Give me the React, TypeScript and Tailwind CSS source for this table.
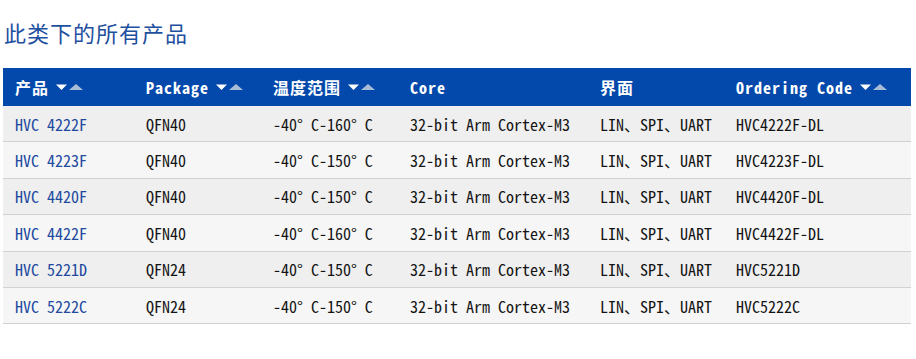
import React from "react";

type Product = {
  name: string;
  pkg: string;
  temp: string;
  core: string;
  iface: string;
  code: string;
};

const products: Product[] = [
  { name: "HVC 4222F", pkg: "QFN40", temp: "-40° C-160° C", core: "32-bit Arm Cortex-M3", iface: "LIN、SPI、UART", code: "HVC4222F-DL" },
  { name: "HVC 4223F", pkg: "QFN40", temp: "-40° C-150° C", core: "32-bit Arm Cortex-M3", iface: "LIN、SPI、UART", code: "HVC4223F-DL" },
  { name: "HVC 4420F", pkg: "QFN40", temp: "-40° C-150° C", core: "32-bit Arm Cortex-M3", iface: "LIN、SPI、UART", code: "HVC4420F-DL" },
  { name: "HVC 4422F", pkg: "QFN40", temp: "-40° C-160° C", core: "32-bit Arm Cortex-M3", iface: "LIN、SPI、UART", code: "HVC4422F-DL" },
  { name: "HVC 5221D", pkg: "QFN24", temp: "-40° C-150° C", core: "32-bit Arm Cortex-M3", iface: "LIN、SPI、UART", code: "HVC5221D" },
  { name: "HVC 5222C", pkg: "QFN24", temp: "-40° C-150° C", core: "32-bit Arm Cortex-M3", iface: "LIN、SPI、UART", code: "HVC5222C" },
];

const cols = "grid grid-cols-[131px_127px_137px_190px_136px_187px]";

function SortArrows() {
  return (
    <svg width="28" height="8" viewBox="0 0 28 8" className="ml-[7px] shrink-0">
      <polygon points="0,1.5 11,1.5 5.5,7" fill="#ffffff" />
      <polygon points="13,7 27,7 20,1" fill="#a9bcd8" />
    </svg>
  );
}

function HeadCell({ label, sortable }: { label: string; sortable?: boolean }) {
  return (
    <div className="flex items-center pl-[12px]">
      <span>{label}</span>
      {sortable && <SortArrows />}
    </div>
  );
}

export default function App() {
  return (
    <div
      className="w-[916px] h-[359px] bg-white px-[3px] pt-[16px]"
      style={{ fontFamily: '"Noto Sans Mono CJK SC", "Noto Sans CJK SC", "Liberation Mono", monospace' }}
    >
      <h2 className="text-[22px] leading-[33px] tracking-[1px] text-[#1f4f9f] pl-[1px]" style={{ fontFamily: '"Noto Sans CJK SC", sans-serif' }}>
        此类下的所有产品
      </h2>

      <div className="mt-[19px] w-[908px]">
        <div className={`${cols} h-[38px] bg-[#0349ab] text-white text-[16px] font-bold tracking-[1px]`}>
          <HeadCell label="产品" sortable />
          <HeadCell label="Package" sortable />
          <HeadCell label="温度范围" sortable />
          <HeadCell label="Core" />
          <HeadCell label="界面" />
          <HeadCell label="Ordering Code" sortable />
        </div>

        {products.map((p, i) => (
          <div
            key={p.name}
            className={`${cols} h-[36.4px] items-center border-b border-[#d2d2d2] text-[16px] text-[#141414] ${
              i % 2 === 0 ? "bg-[#efefef]" : "bg-[#f6f6f6]"
            }`}
          >
            <div className="pl-[12px] text-[#21499f]">{p.name}</div>
            <div className="pl-[12px]">{p.pkg}</div>
            <div className="pl-[12px]">{p.temp}</div>
            <div className="pl-[12px]">{p.core}</div>
            <div className="pl-[12px]">{p.iface}</div>
            <div className="pl-[12px]">{p.code}</div>
          </div>
        ))}
      </div>
    </div>
  );
}
